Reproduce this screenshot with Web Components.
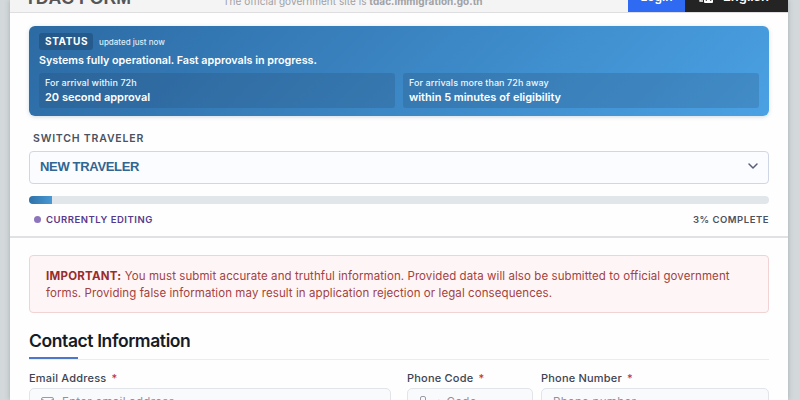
<!DOCTYPE html>
<html lang="en">
<head>
<meta charset="utf-8">
<title>TDAC Form</title>
<style>
  html, body {
    height: 400px;
    margin: 0;
    overflow: hidden;
  }

  body {
    background: #d3d9da;
    color: #4a5160;
    font-family: Inter, "Liberation Sans", sans-serif;
  }
</style>
</head>
<body>
<tdac-page>
  <tdac-header slot="header" name="TDAC FORM"></tdac-header>
  <status-banner slot="top" label="STATUS" updated="updated just now">
    Systems fully operational. Fast approvals in progress.
    <approval-time slot="times" when="For arrival within 72h">20 second approval</approval-time>
    <approval-time slot="times" when="For arrivals more than 72h away">within 5 minutes of eligibility</approval-time>
  </status-banner>
  <traveler-switch slot="top" label="SWITCH TRAVELER">NEW TRAVELER</traveler-switch>
  <form-progress slot="top" percent="3">CURRENTLY EDITING</form-progress>
  <important-note label="IMPORTANT:">You must submit accurate and truthful information. Provided data will also be submitted to official government forms. Providing false information may result in application rejection or legal consequences.</important-note>
  <form-section heading="Contact Information">
    <form-field label="Email Address" placeholder="Enter email address" icon="mail"></form-field>
    <form-field label="Phone Code" placeholder="+ Code" icon="phone"></form-field>
    <form-field label="Phone Number" placeholder="Phone number"></form-field>
  </form-section>
</tdac-page>

<script>
const icons = {
  mail: '<svg width="13" height="10" viewBox="0 0 13 10"><rect x=".5" y=".5" width="12" height="9" rx="1.5"/><path d="M1 2l5.500 4L12 2"/></svg>',
  phone: '<svg width="8" height="12" viewBox="0 0 8 12"><rect x="1.500" y=".5" width="5" height="11" rx="1.500"/><path d="M3 9.500h2"/></svg>'
};

class BaseElement extends HTMLElement {
  connectedCallback() {
    if (this.shadowRoot) return;
    const template = document.createElement('template');
    template.innerHTML = this.render();
    this.attachShadow({ mode: 'open' });
    this.shadowRoot.appendChild(template.content.cloneNode(true));
  }

  attr(name) {
    return this.getAttribute(name) || '';
  }
}

customElements.define('tdac-page', class extends BaseElement {
  render() {
    return `
  <style>
  :host {
    background: #fefefe;
    box-shadow: 0 0 5px rgba(60, 70, 80, .3);
    display: block;
    height: 400px;
    margin: 0 12px 0 10px;
    overflow: hidden;
  }

  .top {
    border-bottom: 2px solid #e0e1e4;
    box-sizing: border-box;
    height: 225px;
    padding: 12.500px 19px 0;
  }

  .body {
    padding: 17px 19px 0;
  }
  </style>
  <slot name="header"></slot>
  <div class="top"><slot name="top"></slot></div>
  <div class="body"><slot></slot></div>`;
  }
});

customElements.define('tdac-header', class extends BaseElement {
  render() {
    return `
  <style>
  :host {
    align-items: flex-end;
    background: #f4f4f5;
    border-bottom: 1px solid #dedee0;
    box-sizing: border-box;
    display: flex;
    height: 13px;
    justify-content: space-between;
    padding-left: 15px;
  }

  .name {
    color: #55565a;
    font: bold 17.700px/20px "Liberation Sans", sans-serif;
    margin-bottom: 4px;
    width: 198px;
  }

  .site {
    color: #a0a1a4;
    flex: 1;
    font-size: 10px;
    letter-spacing: .04px;
    line-height: 14px;
    margin-bottom: 4px;
    white-space: nowrap;
  }

  .action {
    align-items: center;
    box-sizing: border-box;
    color: #fff;
    display: flex;
    font-size: 12px;
    font-weight: 600;
    height: 36px;
    justify-content: center;
    padding: 7px 0 3px;
  }

  .login {
    background: #2f6bf2;
    width: 57px;
  }

  .lang {
    background: #242424;
    font-size: 13px;
    gap: 10px;
    justify-content: flex-start;
    padding-left: 13px;
    width: 103px;
  }
  </style>
  <div class="name">${this.attr('name')}</div>
  <div class="site">The official government site is <b>tdac.immigration.go.th</b></div>
  <div class="action login">Login</div>
  <div class="action lang">
    <svg width="15" height="13" viewBox="0 0 15 13">
      <path d="M1 2h7M4.500 0v2M2 2q1 4 5 5M7 2Q6 6 1 8M2 9v2h3" fill="none" stroke="#fff" stroke-width="1.300"/>
      <rect x="6" y="4" width="9" height="9" rx="1" fill="#fff"/>
      <path d="M8 11l2.500-5L13 11M9 9.500h3" fill="none" stroke="#242424"/>
    </svg>
    English
  </div>`;
  }
});

customElements.define('status-banner', class extends BaseElement {
  render() {
    return `
  <style>
  :host {
    background: linear-gradient(135deg, #2c6aa3, #4aa1e3);
    border-radius: 6px;
    box-shadow: 0 1px 4px rgba(40, 80, 120, .2);
    box-sizing: border-box;
    color: #fff;
    display: block;
    font-size: 11px;
    font-weight: 600;
    height: 90px;
    padding: 7.500px 10px 0;
  }

  .head {
    align-items: center;
    display: flex;
    gap: 6px;
    height: 17px;
  }

  .label {
    background: rgba(20, 50, 80, .32);
    border-radius: 3px;
    font-size: 10px;
    font-weight: 700;
    letter-spacing: .6px;
    line-height: 17px;
    padding: 0 5px 0 6px;
  }

  .updated {
    color: #dcecf8;
    font-size: 8px;
    font-weight: 500;
  }

  .message {
    font-size: 10.750px;
    line-height: 14px;
    margin-top: 4px;
  }

  .times {
    display: grid;
    gap: 8px;
    grid-template-columns: 1fr 1fr;
    margin-top: 4.500px;
  }
  </style>
  <div class="head">
    <span class="label">${this.attr('label')}</span>
    <span class="updated">${this.attr('updated')}</span>
  </div>
  <div class="message"><slot></slot></div>
  <div class="times"><slot name="times"></slot></div>`;
  }
});

customElements.define('approval-time', class extends BaseElement {
  render() {
    return `
  <style>
  :host {
    background: rgba(35, 70, 105, .22);
    border-radius: 3px;
    box-sizing: border-box;
    display: block;
    height: 35px;
    line-height: 15px;
    padding: 2px 6px;
  }

  .when {
    color: #edf6fd;
    font-size: 9px;
    font-weight: 500;
    letter-spacing: .07px;
    line-height: 15px;
  }
  </style>
  <div class="when">${this.attr('when')}</div>
  <slot></slot>`;
  }
});

customElements.define('traveler-switch', class extends BaseElement {
  render() {
    return `
  <style>
  :host {
    display: block;
    margin-top: 16px;
  }

  .label {
    font-size: 10.500px;
    font-weight: 600;
    letter-spacing: .8px;
    line-height: 14px;
    padding-left: 4px;
  }

  .select {
    align-items: center;
    background: #fafcff;
    border: 1px solid #cfd6e4;
    border-radius: 4px;
    box-sizing: border-box;
    color: #316693;
    display: flex;
    font: bold 13px "Liberation Sans", sans-serif;
    height: 33px;
    justify-content: space-between;
    letter-spacing: -.33px;
    margin-top: 5px;
    padding: 0 9px 2px 10px;
  }
  </style>
  <div class="label">${this.attr('label')}</div>
  <div class="select">
    <span><slot></slot></span>
    <svg width="12" height="8" viewBox="0 0 12 8"><path d="M2 2l4 4 4-4" fill="none" stroke="#5b5d76" stroke-width="1.500" stroke-linecap="round" stroke-linejoin="round"/></svg>
  </div>`;
  }
});

customElements.define('form-progress', class extends BaseElement {
  render() {
    return `
  <style>
  :host {
    display: block;
    font-size: 9.500px;
    font-weight: 600;
    letter-spacing: .52px;
    line-height: 13px;
    margin-top: 12.500px;
  }

  .track {
    background: #e1e6ea;
    border-radius: 4px;
    height: 8px;
    overflow: hidden;
  }

  .bar {
    background: linear-gradient(90deg, #3071a9, #4798d4);
    height: 8px;
    width: calc(${this.attr('percent')}% + 1px);
  }

  .legend {
    align-items: center;
    display: flex;
    margin-top: 9px;
  }

  .dot {
    background: #8c75bd;
    border-radius: 50%;
    height: 7px;
    margin: 0 5px 0 5px;
    width: 7px;
  }

  .state {
    color: #56388c;
    flex: 1;
  }
  </style>
  <div class="track"><div class="bar"></div></div>
  <div class="legend">
    <span class="dot"></span>
    <span class="state"><slot></slot></span>
    <span class="percent">${this.attr('percent')}% COMPLETE</span>
  </div>`;
  }
});

customElements.define('important-note', class extends BaseElement {
  render() {
    return `
  <style>
  :host {
    background: #fef6f6;
    border: 1px solid #f0d3d5;
    border-radius: 4px;
    box-sizing: border-box;
    color: #a4413e;
    display: block;
    font-size: 11.500px;
    height: 58px;
    letter-spacing: .08px;
    line-height: 16.500px;
    padding: 12px 16px;
  }

  b {
    color: #982c2b;
    letter-spacing: .25px;
  }
  </style>
  <b>${this.attr('label')}</b> <slot></slot>`;
  }
});

customElements.define('form-section', class extends BaseElement {
  render() {
    return `
  <style>
  :host {
    display: block;
    margin-top: 16px;
  }

  .heading {
    border-bottom: 1px solid #ebecef;
    color: #171b25;
    font-size: 17.500px;
    font-weight: 600;
    height: 30px;
    letter-spacing: -.4px;
    line-height: 24px;
  }

  .heading::after {
    background: #4c77cb;
    content: "";
    display: block;
    height: 2px;
    margin-top: 4px;
    width: 49px;
  }

  .fields {
    display: grid;
    grid-template-columns: 378px 134px 1fr;
    margin-top: 11px;
  }
  </style>
  <div class="heading">${this.attr('heading')}</div>
  <div class="fields"><slot></slot></div>`;
  }
});

customElements.define('form-field', class extends BaseElement {
  render() {
    return `
  <style>
  :host {
    display: block;
  }

  :host([icon="mail"]) .box {
    margin-right: 16px;
  }

  :host([icon="phone"]) .box {
    margin-right: 8px;
  }

  .label {
    color: #3d4453;
    font-size: 11px;
    font-weight: 500;
    letter-spacing: .2px;
    line-height: 15px;
    white-space: nowrap;
  }

  .label span {
    color: #bd3434;
    margin-left: 2px;
  }

  .box {
    align-items: center;
    background: #f9fafc;
    border: 1px solid #e1e4e9;
    border-radius: 5px;
    box-sizing: border-box;
    color: #8d929c;
    display: flex;
    font-size: 11.500px;
    gap: 8px;
    height: 28px;
    letter-spacing: .3px;
    margin-top: 2px;
    padding: 0 11px;
    white-space: nowrap;
  }

  svg {
    fill: none;
    stroke: #979ca6;
  }
  </style>
  <div class="label">${this.attr('label')} <span>*</span></div>
  <div class="box">${icons[this.attr('icon')] || ''}${this.attr('placeholder')}</div>`;
  }
});
</script>
</body>
</html>
